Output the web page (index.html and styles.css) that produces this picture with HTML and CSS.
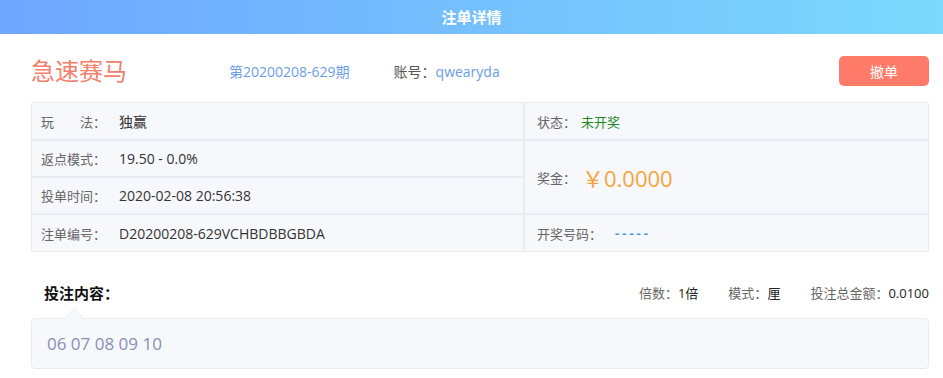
FILE: index.html
```html
<!DOCTYPE html>
<html lang="zh-CN">
<head>
  <meta charset="UTF-8" />
  <meta name="viewport" content="width=device-width, initial-scale=1" />
  <title>注单详情</title>
  <link rel="stylesheet" href="styles.css">
</head>
<body>

  <!-- Верхняя полоса -->
  <div class="top-bar">注单详情</div>

  <div class="page">
    <div class="title-row">
      <div class="game-name">急速赛马</div>
      <div class="issue">第20200208-629期</div>
      <div class="account">账号：<span>qwearyda</span></div>
      <button class="cancel-btn">撤单</button>
    </div>

    <div class="info">
      <div class="cell"><span class="label">玩　　法：</span><span class="value">独赢</span></div>
      <div class="cell cell-r"><span class="label-r">状态：</span><span class="status">未开奖</span></div>

      <div class="cell"><span class="label">返点模式：</span><span class="value">19.50 - 0.0%</span></div>
      <div class="cell cell-r prize-cell"><span class="label-r">奖金：</span><span class="prize">￥0.0000</span></div>

      <div class="cell"><span class="label">投单时间：</span><span class="value">2020-02-08 20:56:38</span></div>

      <div class="cell"><span class="label">注单编号：</span><span class="value">D20200208-629VCHBDBBGBDA</span></div>
      <div class="cell cell-r"><span class="label-r">开奖号码：</span><span class="dashes">-----</span></div>
    </div>

    <div class="bet-head">
      <div class="bet-title">投注内容：</div>
      <div class="bet-meta">
        <span>倍数：<b>1倍</b></span>
        <span>模式：<b>厘</b></span>
        <span>投注总金额：<b>0.0100</b></span>
      </div>
    </div>

    <div class="bet-box">06 07 08 09 10</div>
  </div>

</body>
</html>
```

FILE: styles.css
```css
* {
  box-sizing: border-box;
}
html, body {
  margin: 0;
  background: #fff;
  font-family: "Open Sans", "Noto Sans CJK SC", sans-serif;
  font-size: 13px;
  color: #333;
}

/* Шапка с градиентом */
.top-bar {
  height: 34px;
  line-height: 34px;
  text-align: center;
  color: #fff;
  font-size: 15px;
  font-weight: 700;
  background: linear-gradient(to right, #6ea6ff, #7bd9fc);
}

.page {
  padding: 0 14px 0 31px;
}

/* Строка заголовка */
.title-row {
  display: flex;
  align-items: center;
  height: 30px;
  margin-top: 22px;
}
.game-name {
  width: 198px;
  font-size: 24px;
  color: #f2806c;
  line-height: 30px;
}
.issue {
  color: #6b9de6;
  font-size: 14px;
  margin-right: 44px;
}
.account {
  color: #555;
  font-size: 14px;
}
.account span {
  color: #6b9de6;
}
.cancel-btn {
  margin-left: auto;
  width: 90px;
  height: 30px;
  border: none;
  border-radius: 5px;
  background: #fe7b69;
  color: #fff;
  font-family: inherit;
  font-size: 14px;
  cursor: pointer;
}

/* Таблица с информацией */
.info {
  margin-top: 16px;
  display: grid;
  grid-template-columns: 491px 1fr;
  grid-template-rows: 36px 35px 35px 36px;
  gap: 2px;
  background: #e9ebf0;
  border: 1px solid #e9ebf0;
  border-radius: 2px;
}
.cell {
  display: flex;
  align-items: center;
  background: #f7f8fb;
  padding: 0 9px;
}
.cell-r {
  padding-left: 12px;
}
.prize-cell {
  grid-row: span 2;
}
.label {
  width: 78px;
  color: #666;
}
.label-r {
  color: #666;
}
.value {
  color: #333;
  font-size: 14px;
}
.status {
  color: #1e8a1e;
  margin-left: 5px;
}
.prize {
  color: #f5a53c;
  font-size: 22px;
  margin-left: 6px;
}
.dashes {
  color: #3d9bd8;
  font-weight: 700;
  letter-spacing: 3px;
  margin-left: 13px;
}

/* Блок с содержимым ставки */
.bet-head {
  display: flex;
  align-items: center;
  justify-content: space-between;
  height: 24px;
  margin-top: 28px;
  padding-left: 13px;
}
.bet-title {
  font-size: 15px;
  font-weight: 700;
  color: #111;
}
.bet-meta {
  display: flex;
  gap: 30px;
  color: #666;
}
.bet-meta b {
  font-weight: 400;
  color: #222;
}

.bet-box {
  position: relative;
  margin-top: 14px;
  height: 51px;
  line-height: 49px;
  padding-left: 15px;
  background: #f7f8fb;
  border: 1px solid #e9ebf0;
  border-radius: 4px;
  color: #8a8eb6;
  font-size: 17px;
}
/* Стрелочка над блоком */
.bet-box::before,
.bet-box::after {
  content: "";
  position: absolute;
  left: 32px;
  top: -11px;
  border: 10px solid transparent;
  border-top: 0;
  border-bottom: 11px solid #e9ebf0;
}
.bet-box::after {
  left: 33px;
  top: -10px;
  border-width: 0 9px 10px;
  border-bottom-color: #f7f8fb;
}
```
